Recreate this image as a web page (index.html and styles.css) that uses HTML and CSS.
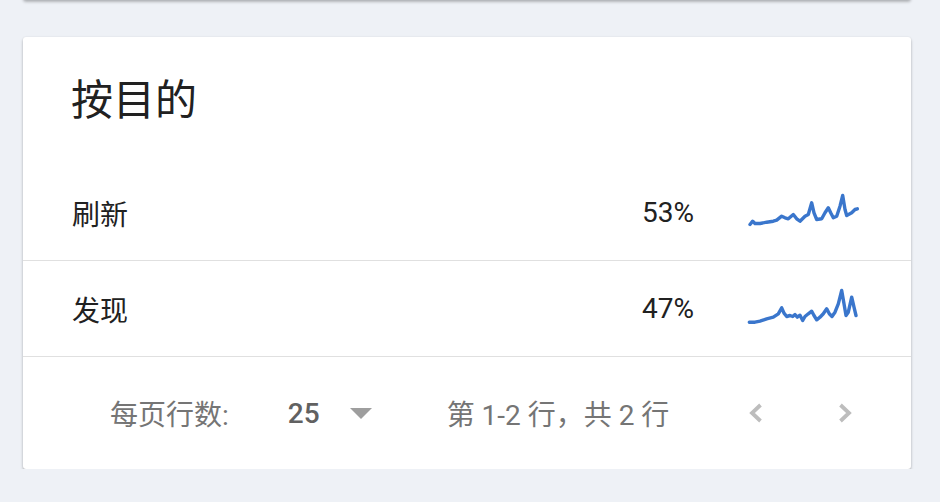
FILE: index.html
```html
<!DOCTYPE html>
<html lang="zh-CN">
<head>
<meta charset="utf-8">
<link rel="stylesheet" href="styles.css">
</head>
<body>
<div class="page">
  <div class="card-prev"></div>
  <div class="card">
    <div class="card-title">按目的</div>
    <div class="row">
      <div class="row-label">刷新</div>
      <div class="row-value">53%</div>
      <svg class="spark" width="112" height="40" viewBox="0 0 112 40">
        <polyline points="3,31.5 5.7,28.2 8,30.5 13,30.5 19.7,29.2 26.3,28.2 29.7,27.2 34.7,23.2 38,24.8 41.3,25.8 46.3,21.5 49.7,25.8 53,28.2 58,23.2 61.3,21.5 64.7,9.8 67,19.8 69.7,26.5 74.7,25.8 78,19.8 81.3,14.8 83.7,19.8 86.3,24.8 89.7,23.2 93,13.2 95.7,2.5 98,16.5 99.7,22.5 104.7,19.8 108,16.5 110.3,15.8"/>
      </svg>
    </div>
    <div class="row">
      <div class="row-label">发现</div>
      <div class="row-value">47%</div>
      <svg class="spark" width="112" height="40" viewBox="0 0 112 40">
        <polyline points="2.3,33.2 8,33.2 13,32.2 19.7,29.8 26.3,28.2 31.3,24.8 34.7,18.8 37,24.2 39.7,27.5 43,26.5 45.7,27.5 48,25.5 50.3,28.2 53,26.2 55.7,31.5 58,27.5 61.3,24.8 64.7,22.2 67,26.5 69.7,30.8 73,28.2 76.3,24.8 79.7,19.8 82.3,24.8 85,27.5 88,23.2 91.3,14.8 94.7,1.5 97,14.8 99,26.5 101.3,23.2 104.7,8.2 107,18.2 109,26.5"/>
      </svg>
    </div>
    <div class="footer">
      <span class="rows-label">每页行数:</span>
      <span class="rows-select">
        <span class="rows-value">25</span>
        <span class="caret"></span>
      </span>
      <span class="range">第 1-2 行，共 2 行</span>
      <button class="nav" aria-label="上一页">
        <svg width="14" height="20" viewBox="0 0 14 20"><polyline points="11.5,2 3,10 11.5,18"/></svg>
      </button>
      <button class="nav next" aria-label="下一页">
        <svg width="14" height="20" viewBox="0 0 14 20"><polyline points="2.5,2 11,10 2.5,18"/></svg>
      </button>
    </div>
  </div>
</div>
</body>
</html>
```

FILE: styles.css
```css
html, body {
  margin: 0;
  padding: 0;
  background: #eef1f6;
}

body {
  font-family: Roboto, "Noto Sans CJK SC", sans-serif;
  color: #212121;
}

.page {
  display: flow-root;
  padding: 0 29px 0 23px;
}

.card-prev {
  height: 10px;
  margin-top: -10px;
  background: #fff;
  border-radius: 0 0 3px 3px;
  box-shadow: 0 2px 3px rgba(0, 0, 0, 0.25), 0 0 2px rgba(0, 0, 0, 0.08);
}

.card {
  margin-top: 37px;
  background: #fff;
  border-radius: 3px;
  box-shadow: 0 2px 3px rgba(0, 0, 0, 0.25), 0 0 2px rgba(0, 0, 0, 0.08);
}

.card-title {
  height: 128px;
  box-sizing: border-box;
  padding: 40px 48px 0 48px;
  font-size: 42px;
  line-height: 48px;
  color: #212121;
}

.row {
  display: flex;
  align-items: center;
  height: 96px;
  box-sizing: border-box;
  padding: 0 52px 0 49px;
  border-bottom: 1px solid #e0e0e0;
  font-size: 28px;
}

.row-label {
  flex: 1;
}

.row-value {
  color: #212121;
}

.spark {
  margin-left: 53px;
  overflow: visible;
}

.spark polyline {
  fill: none;
  stroke: #3a76cc;
  stroke-width: 3.4;
  stroke-linejoin: round;
  stroke-linecap: round;
}

.footer {
  display: flex;
  align-items: center;
  height: 112px;
  padding-left: 87px;
  font-size: 28px;
  color: #757575;
}

.rows-label {
  margin-right: 59px;
}

.rows-select {
  display: flex;
  align-items: center;
}

.rows-value {
  font-weight: 500;
  color: #616161;
}

.caret {
  margin-left: 30px;
  width: 0;
  height: 0;
  border-left: 11px solid transparent;
  border-right: 11px solid transparent;
  border-top: 11px solid #9e9e9e;
}

.range {
  margin-left: 75px;
}

.nav {
  display: flex;
  align-items: center;
  justify-content: center;
  padding: 0;
  margin: 0 0 0 69px;
  border: 0;
  background: none;
  width: 36px;
  height: 36px;
}

.nav.next {
  margin-left: 53px;
}

.nav svg polyline {
  fill: none;
  stroke: #bdbdbd;
  stroke-width: 3.8;
}
```
